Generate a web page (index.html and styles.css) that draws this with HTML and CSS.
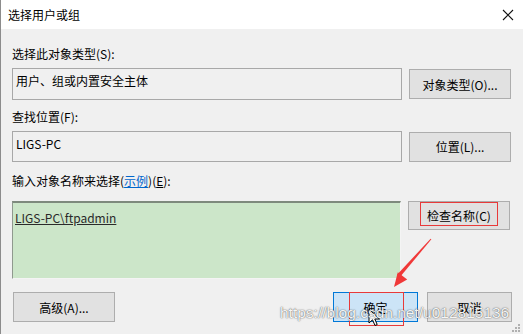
FILE: index.html
```html
<!DOCTYPE html>
<html>
<head>
    <meta charset="utf-8" />
    <title>选择用户或组</title>
    <link rel="stylesheet" href="styles.css">
</head>
<body>
    <div class="dialog">
        <!-- 标题栏 -->
        <div class="titlebar">
            <span class="title">选择用户或组</span>
            <svg class="close" width="12" height="12" viewBox="0 0 12 12">
                <path d="M1 1 L11 11 M11 1 L1 11" stroke="#111" stroke-width="1.1" fill="none"/>
            </svg>
        </div>

        <div class="content">
            <div class="label">选择此对象类型(S):</div>
            <div class="row">
                <div class="field">用户、组或内置安全主体</div>
                <button class="btn">对象类型(O)...</button>
            </div>

            <div class="label">查找位置(F):</div>
            <div class="row row-small">
                <div class="field">LIGS-PC</div>
                <button class="btn">位置(L)...</button>
            </div>

            <div class="label">输入对象名称来选择(<a class="link">示例</a>)(<u>E</u>):</div>
            <div class="row row-top">
                <div class="names"><u>LIGS-PC\ftpadmin</u></div>
                <button class="btn btn-check">检查名称(C)<span class="mark mark-check"></span></button>
            </div>

            <div class="footer">
                <button class="btn btn-wide">高级(A)...</button>
                <div class="footer-right">
                    <button class="btn btn-small btn-primary">确定<span class="mark mark-ok"></span></button>
                    <button class="btn btn-small">取消</button>
                </div>
            </div>
        </div>

        <!-- 标注箭头 -->
        <svg class="arrow" width="523" height="334" viewBox="0 0 523 334">
            <polygon points="431.4,239.3 430.6,238.7 397.0,274.8 400.0,277.0" fill="#f03838"/>
            <polygon points="394,287 407.2,279.6 397.8,272.2" fill="#f03838"/>
        </svg>

        <!-- 鼠标指针 -->
        <svg class="cursor" width="14" height="20" viewBox="0 0 14 20">
            <path d="M1 1 L1 15 L4.5 11.8 L7 17.5 L9.2 16.5 L6.8 11 L11.5 11 Z" fill="#fff" stroke="#000" stroke-width="1"/>
        </svg>

        <div class="watermark">https://blog.csdn.net/u012815136</div>

        <svg class="grip" width="8" height="8" viewBox="0 0 8 8">
            <rect x="6" y="0" width="2" height="2" fill="#b0b0b0"/>
            <rect x="3" y="3" width="2" height="2" fill="#b0b0b0"/>
            <rect x="6" y="3" width="2" height="2" fill="#b0b0b0"/>
            <rect x="0" y="6" width="2" height="2" fill="#b0b0b0"/>
            <rect x="3" y="6" width="2" height="2" fill="#b0b0b0"/>
            <rect x="6" y="6" width="2" height="2" fill="#b0b0b0"/>
        </svg>
    </div>
</body>
</html>
```

FILE: styles.css
```css
/* 全局 */
body {
    margin: 0;
    font-family: "Noto Sans CJK SC", "Noto Sans", sans-serif;
    font-size: 12px;
    color: #000;
}

.dialog {
    position: relative;
    width: 523px;
    height: 334px;
    box-sizing: border-box;
    border-left: 1px solid #8c8c8c;
    background-color: #f0f0f0;
    overflow: hidden;
}

/* 标题栏 */
.titlebar {
    height: 29px;
    background-color: #ffffff;
    display: flex;
    align-items: center;
    justify-content: space-between;
    padding: 0 9px 0 7px;
}

.title {
    font-size: 12px;
    line-height: 16px;
}

/* 内容区 */
.content {
    padding: 17px 11px 0 11px;
}

.label {
    line-height: 16px;
    height: 16px;
}

.link {
    color: #0066cc;
    text-decoration: underline;
}

.row {
    display: flex;
    gap: 7px;
    align-items: center;
    margin: 6px 0 9px 0;
    height: 32px;
}

.row-small {
    height: 31px;
    margin-bottom: 11px;
}

.row-top {
    align-items: flex-start;
    height: 78px;
    margin-top: 12px;
    margin-bottom: 13px;
}

.field {
    width: 390px;
    height: 100%;
    box-sizing: border-box;
    border: 1px solid #a8a8a8;
    padding: 4px 3px;
    line-height: 16px;
}

.row:first-of-type .field {
    padding-top: 6px;
}

.names {
    width: 389px;
    height: 78px;
    box-sizing: border-box;
    background-color: #cce6c9;
    border-top: 2px solid #7e8a7d;
    border-left: 1px solid #8f998e;
    border-right: 1px solid #f4f4f4;
    border-bottom: 1px solid #f4f4f4;
    padding: 7px 2px;
    line-height: 16px;
    color: #2a2a2a;
}

/* 按钮 */
.btn {
    position: relative;
    width: 102px;
    height: 30px;
    margin: 0;
    padding: 0;
    border: 1px solid #adadad;
    background-color: #e1e1e1;
    font-family: inherit;
    font-size: 12px;
    color: #000;
}

.btn-check {
    height: 29px;
}

.btn-small {
    width: 85px;
}

.btn-primary {
    background-color: #cce4f7;
    border-color: #0078d7;
}

.footer {
    display: flex;
    justify-content: space-between;
    padding-left: 1px;
}

.footer-right {
    display: flex;
    gap: 9px;
}

/* 红框标注 */
.mark {
    position: absolute;
    border: 1px solid #e83a3a;
}

.mark-check {
    left: 11px;
    top: 0;
    width: 76px;
    height: 22px;
}

.mark-ok {
    left: 15px;
    top: -1px;
    width: 53px;
    height: 32px;
}

.arrow {
    position: absolute;
    left: -1px;
    top: 0;
}

.cursor {
    position: absolute;
    left: 367px;
    top: 308px;
}

/* 水印 */
.watermark {
    position: absolute;
    left: 279px;
    top: 304px;
    font-family: "Liberation Sans", Arial, sans-serif;
    font-size: 15.5px;
    line-height: 18px;
    color: rgba(255, 255, 255, 0.95);
    text-shadow: 0 0 1px rgba(0, 0, 0, 0.6), 0 0 2px rgba(0, 0, 0, 0.35);
    white-space: nowrap;
}

.grip {
    position: absolute;
    right: 3px;
    bottom: 2px;
}
```
